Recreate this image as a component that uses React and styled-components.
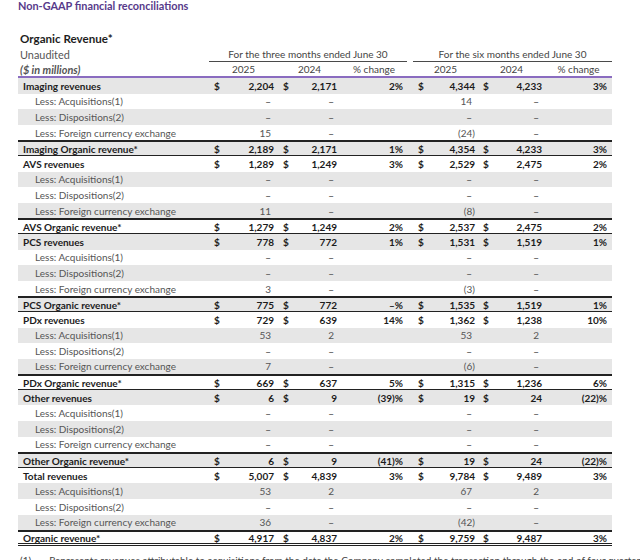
import React from "react";
import styled, { createGlobalStyle } from "styled-components";

const COLS = "191px 69px 63px 66px 6px 65px 67px 67px";
const DASH = "–";

const GlobalStyle = createGlobalStyle`
  html, body {
    margin: 0;
    padding: 0;
    overflow: hidden;
    background: #fff;
  }
  body {
    font-family: Lato, "Liberation Sans", sans-serif;
    font-size: 10px;
    color: #222;
  }
`;

const Page = styled.div`
  width: 640px;
  height: 560px;
  overflow: hidden;
  padding-left: 18px;
  box-sizing: border-box;
`;

const Title = styled.h1`
  margin: 0 0 18px;
  height: 12px;
  line-height: 12px;
  font-size: 10.9px;
  font-weight: 700;
  color: #573a8a;
`;

const HeadRow = styled.div`
  display: grid;
  grid-template-columns: ${COLS};
  width: 594px;
  height: 16px;
  box-sizing: border-box;
  align-items: center;
  border-bottom: ${({ $purple }) => ($purple ? "2px solid #8a6cc0" : "none")};
`;

const HeadLabel = styled.div`
  padding-left: 2px;
  white-space: nowrap;
  font-size: ${({ $strong }) => ($strong ? "11.6px" : "10.9px")};
  color: ${({ $strong }) => ($strong ? "#1e1e1e" : "#555")};
  font-weight: ${({ $strong, $italic }) => ($strong || $italic ? 700 : 400)};
  font-style: ${({ $italic }) => ($italic ? "italic" : "normal")};
`;

const SpanHead = styled.div`
  grid-column: ${({ $from }) => `${$from} / span 3`};
  align-self: stretch;
  display: flex;
  align-items: center;
  justify-content: center;
  border-bottom: 1.5px solid #4a4a4a;
  color: #444;
  box-sizing: border-box;
`;

const YearHead = styled.div`
  text-align: center;
  color: #444;
`;

const Row = styled.div`
  display: grid;
  grid-template-columns: ${COLS};
  width: 594px;
  height: 15.6px;
  box-sizing: border-box;
  align-items: center;
  background: ${({ $shade }) => ($shade ? "#e6e6e6" : "#fff")};
  border-top: ${({ $total }) => ($total ? "2px solid #222" : "none")};
  border-bottom: ${({ $total, $last }) =>
    $last ? "3px double #222" : $total ? "1px solid #222" : "none"};
  color: ${({ $sub }) => ($sub ? "#555" : "#1c1c1c")};
  font-weight: ${({ $sub }) => ($sub ? 400 : 700)};
  line-height: 12px;
`;

const Label = styled.div`
  padding-left: ${({ $sub }) => ($sub ? "17px" : "5px")};
  white-space: nowrap;
`;

const Cell = styled.div`
  display: flex;
  justify-content: space-between;
  padding: 0 ${({ $pad }) => $pad}px 0 5px;
  white-space: nowrap;
`;

const DashMark = styled.span`
  font-weight: 700;
  color: #666;
`;

const Footnote = styled.div`
  margin-top: 8px;
  display: flex;
  gap: 18px;
  padding-left: 2px;
  color: #444;
  white-space: nowrap;
`;

const segments = [
  {
    rev: "Imaging revenues",
    org: "Imaging Organic revenue*",
    r: ["2,204", "2,171", "2%", "4,344", "4,233", "3%"],
    acq: [DASH, DASH, "14", DASH],
    disp: [DASH, DASH, DASH, DASH],
    fx: ["15", DASH, "(24)", DASH],
    o: ["2,189", "2,171", "1%", "4,354", "4,233", "3%"],
  },
  {
    rev: "AVS revenues",
    org: "AVS Organic revenue*",
    r: ["1,289", "1,249", "3%", "2,529", "2,475", "2%"],
    acq: [DASH, DASH, DASH, DASH],
    disp: [DASH, DASH, DASH, DASH],
    fx: ["11", DASH, "(8)", DASH],
    o: ["1,279", "1,249", "2%", "2,537", "2,475", "2%"],
  },
  {
    rev: "PCS revenues",
    org: "PCS Organic revenue*",
    r: ["778", "772", "1%", "1,531", "1,519", "1%"],
    acq: [DASH, DASH, DASH, DASH],
    disp: [DASH, DASH, DASH, DASH],
    fx: ["3", DASH, "(3)", DASH],
    o: ["775", "772", DASH + "%", "1,535", "1,519", "1%"],
  },
  {
    rev: "PDx revenues",
    org: "PDx Organic revenue*",
    r: ["729", "639", "14%", "1,362", "1,238", "10%"],
    acq: ["53", "2", "53", "2"],
    disp: [DASH, DASH, DASH, DASH],
    fx: ["7", DASH, "(6)", DASH],
    o: ["669", "637", "5%", "1,315", "1,236", "6%"],
  },
  {
    rev: "Other revenues",
    org: "Other Organic revenue*",
    r: ["6", "9", "(39)%", "19", "24", "(22)%"],
    acq: [DASH, DASH, DASH, DASH],
    disp: [DASH, DASH, DASH, DASH],
    fx: [DASH, DASH, DASH, DASH],
    o: ["6", "9", "(41)%", "19", "24", "(22)%"],
  },
  {
    rev: "Total revenues",
    org: "Organic revenue*",
    r: ["5,007", "4,839", "3%", "9,784", "9,489", "3%"],
    acq: ["53", "2", "67", "2"],
    disp: [DASH, DASH, DASH, DASH],
    fx: ["36", DASH, "(42)", DASH],
    o: ["4,917", "4,837", "2%", "9,759", "9,487", "3%"],
  },
];

// sub values without a closing paren sit a little further in
const subPad = (v) => (v.endsWith(")") ? 4 : 7);

const SubValue = ({ v }) =>
  v === DASH ? <DashMark>{v}</DashMark> : <span>{v}</span>;

const MainCells = ({ v }) => (
  <>
    <Cell $pad={4}><span>$</span><span>{v[0]}</span></Cell>
    <Cell $pad={4}><span>$</span><span>{v[1]}</span></Cell>
    <Cell $pad={4}><span /><span>{v[2]}</span></Cell>
    <div />
    <Cell $pad={3}><span>$</span><span>{v[3]}</span></Cell>
    <Cell $pad={3}><span>$</span><span>{v[4]}</span></Cell>
    <Cell $pad={5}><span /><span>{v[5]}</span></Cell>
  </>
);

const SubCells = ({ v }) => (
  <>
    <Cell $pad={subPad(v[0])}><span /><SubValue v={v[0]} /></Cell>
    <Cell $pad={subPad(v[1])}><span /><SubValue v={v[1]} /></Cell>
    <div />
    <div />
    <Cell $pad={subPad(v[2]) - 1}><span /><SubValue v={v[2]} /></Cell>
    <Cell $pad={subPad(v[3]) - 1}><span /><SubValue v={v[3]} /></Cell>
    <div />
  </>
);

export default function App() {
  const rows = [];
  segments.forEach((s, si) => {
    const last = si === segments.length - 1;
    rows.push({ label: s.rev, v: s.r });
    rows.push({ label: "Less: Acquisitions(1)", v: s.acq, sub: true });
    rows.push({ label: "Less: Dispositions(2)", v: s.disp, sub: true });
    rows.push({ label: "Less: Foreign currency exchange", v: s.fx, sub: true });
    rows.push({ label: s.org, v: s.o, total: true, last });
  });

  return (
    <>
      <GlobalStyle />
      <Page>
        <Title>Non-GAAP financial reconciliations</Title>
        <HeadRow>
          <HeadLabel $strong>Organic Revenue*</HeadLabel>
        </HeadRow>
        <HeadRow>
          <HeadLabel>Unaudited</HeadLabel>
          <SpanHead $from={2}>For the three months ended June 30</SpanHead>
          <SpanHead $from={6}>For the six months ended June 30</SpanHead>
        </HeadRow>
        <HeadRow $purple>
          <HeadLabel $italic>($ in millions)</HeadLabel>
          <YearHead>2025</YearHead>
          <YearHead>2024</YearHead>
          <YearHead>% change</YearHead>
          <div />
          <YearHead>2025</YearHead>
          <YearHead>2024</YearHead>
          <YearHead>% change</YearHead>
        </HeadRow>
        {rows.map((r, i) => (
          <Row
            key={i}
            $shade={i % 2 === 0}
            $sub={r.sub}
            $total={r.total}
            $last={r.last}
          >
            <Label $sub={r.sub}>{r.label}</Label>
            {r.sub ? <SubCells v={r.v} /> : <MainCells v={r.v} />}
          </Row>
        ))}
        <Footnote>
          <span>(1)</span>
          <span>
            Represents revenues attributable to acquisitions from the date the
            Company completed the transaction through the end of four quarters
          </span>
        </Footnote>
      </Page>
    </>
  );
}
